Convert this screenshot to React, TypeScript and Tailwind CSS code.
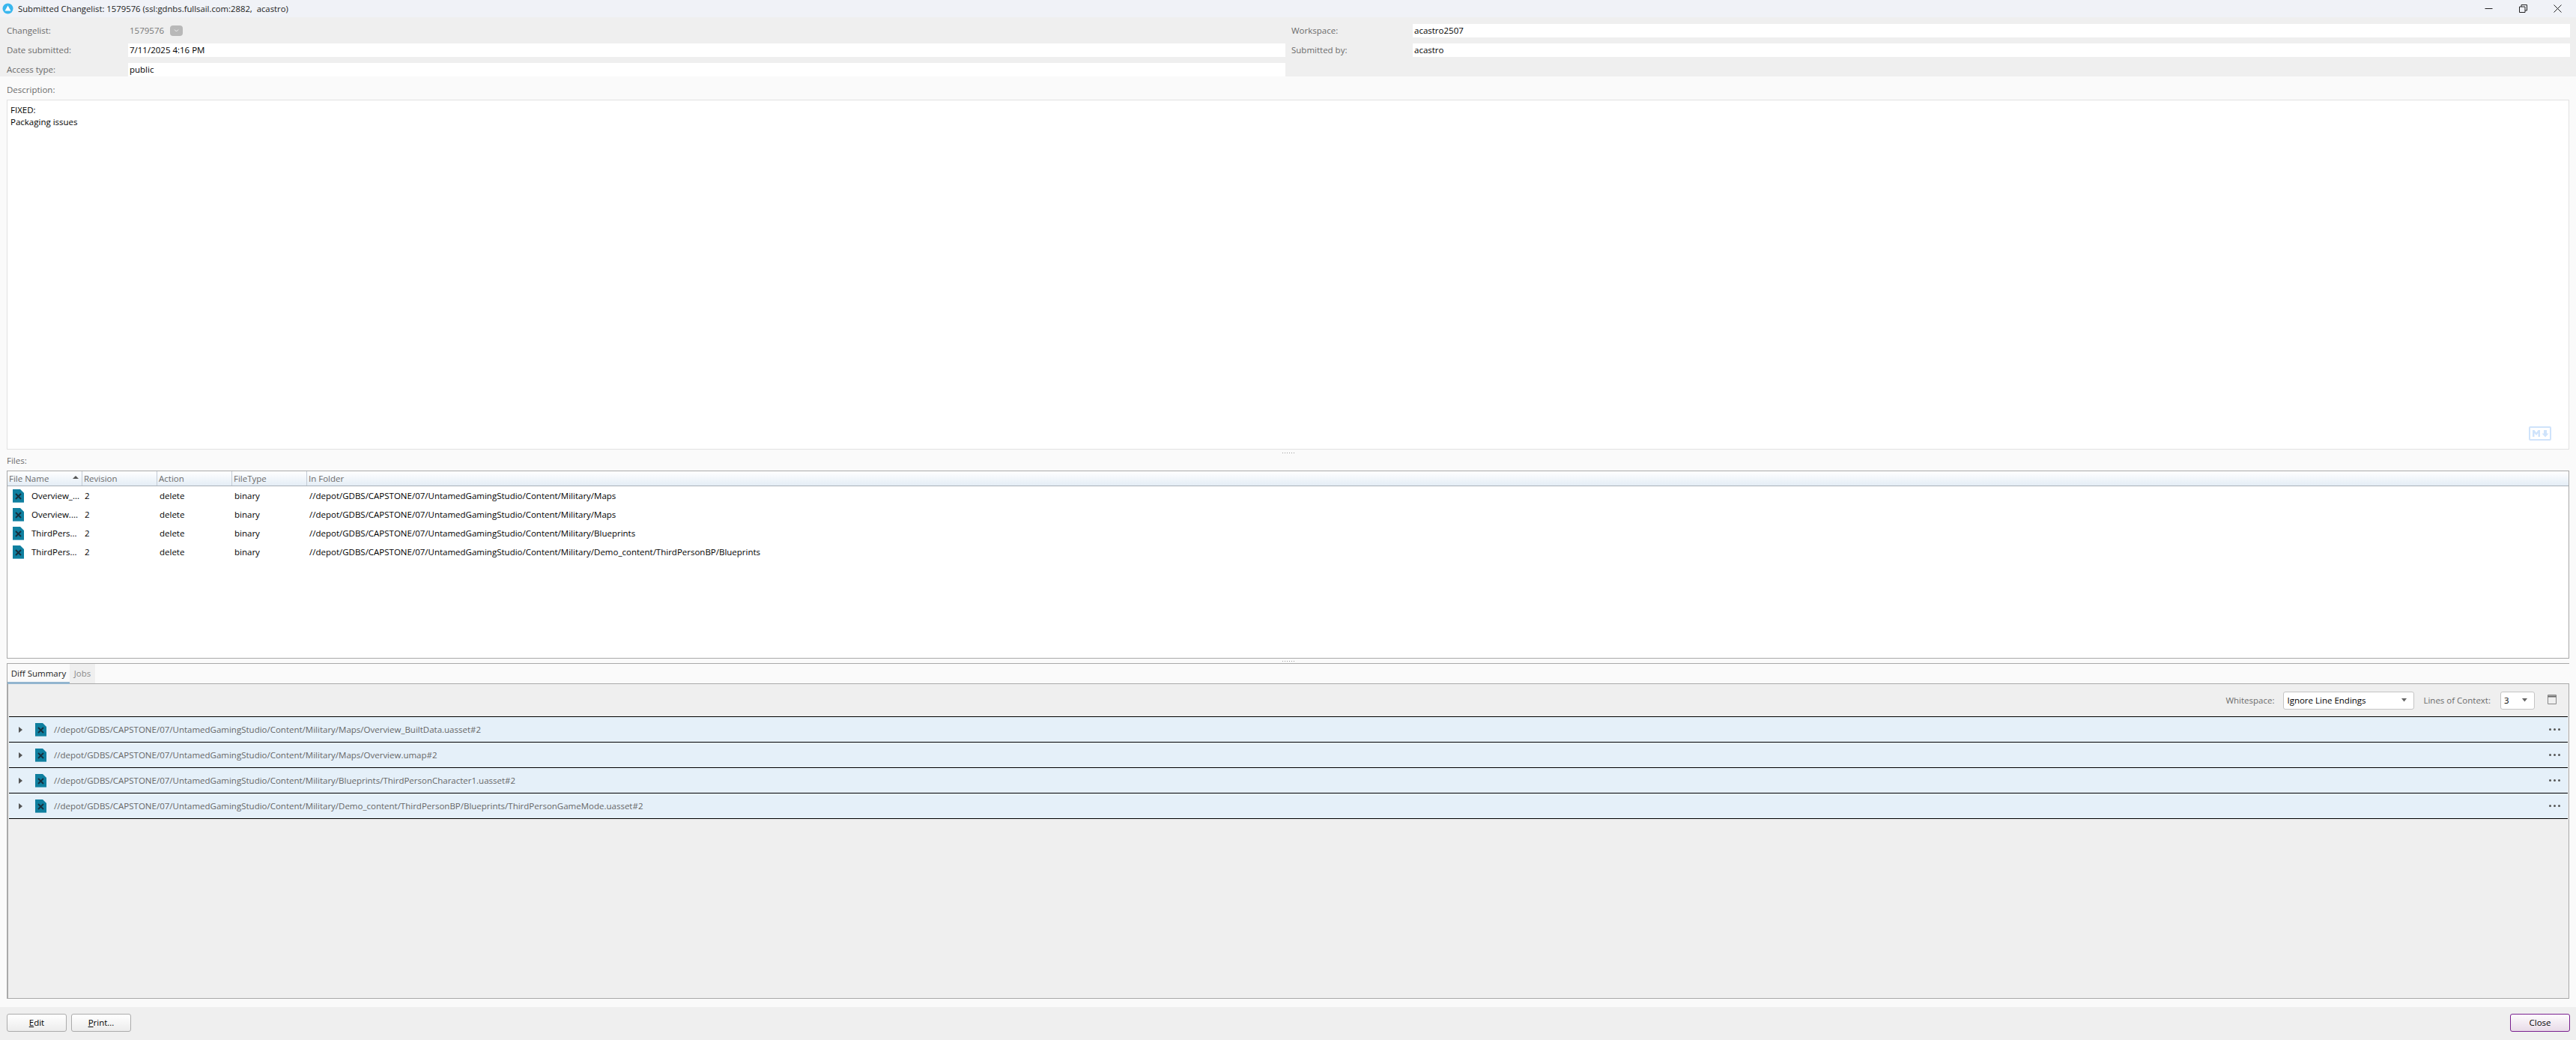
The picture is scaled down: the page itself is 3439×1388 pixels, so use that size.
import type { ReactNode } from 'react'

const FILES = [
  {
    name: 'Overview_...',
    folder: '//depot/GDBS/CAPSTONE/07/UntamedGamingStudio/Content/Military/Maps',
    path: '//depot/GDBS/CAPSTONE/07/UntamedGamingStudio/Content/Military/Maps/Overview_BuiltData.uasset#2',
  },
  {
    name: 'Overview....',
    folder: '//depot/GDBS/CAPSTONE/07/UntamedGamingStudio/Content/Military/Maps',
    path: '//depot/GDBS/CAPSTONE/07/UntamedGamingStudio/Content/Military/Maps/Overview.umap#2',
  },
  {
    name: 'ThirdPers...',
    folder: '//depot/GDBS/CAPSTONE/07/UntamedGamingStudio/Content/Military/Blueprints',
    path: '//depot/GDBS/CAPSTONE/07/UntamedGamingStudio/Content/Military/Blueprints/ThirdPersonCharacter1.uasset#2',
  },
  {
    name: 'ThirdPers...',
    folder: '//depot/GDBS/CAPSTONE/07/UntamedGamingStudio/Content/Military/Demo_content/ThirdPersonBP/Blueprints',
    path: '//depot/GDBS/CAPSTONE/07/UntamedGamingStudio/Content/Military/Demo_content/ThirdPersonBP/Blueprints/ThirdPersonGameMode.uasset#2',
  },
]

function FileIcon() {
  return (
    <svg width="15" height="18" viewBox="0 0 15 18" className="shrink-0">
      <path d="M0 0H10L15 5V18H0Z" fill="#0f7f9f" />
      <path d="M0 17H15V18H0Z" fill="#5fa9c0" />
      <path d="M4 6L11 13M11 6L4 13" stroke="#16303f" strokeWidth="2" fill="none" />
    </svg>
  )
}

function Caret() {
  return (
    <svg width="10" height="5" viewBox="0 0 10 5" className="shrink-0">
      <path d="M1 0H8L4.500 4.500Z" fill="#666" />
    </svg>
  )
}

function Field({ label, value, dim }: { label: string; value: ReactNode; dim?: boolean }) {
  return (
    <div className="flex h-[18px] items-center">
      <div className="w-[162px] shrink-0 text-[#6b6b6b]">{label}</div>
      <div className={`flex h-full flex-1 items-center pl-[2px] ${dim ? '' : 'bg-white'}`}>{value}</div>
    </div>
  )
}

function Header({ label, sorted }: { label: string; sorted?: boolean }) {
  return (
    <div className="flex h-full w-[100px] shrink-0 items-center justify-between border-r border-[#c4ccd6] pl-[2px] pr-[4px] text-[#6b6b6b]">
      <span>{label}</span>
      {sorted && (
        <svg width="8" height="4" viewBox="0 0 8 4" className="mb-[3px]">
          <path d="M0 4L4 0L8 4Z" fill="#555" />
        </svg>
      )}
    </div>
  )
}

function Splitter() {
  return (
    <div className="flex h-[3px] items-center justify-center gap-[2px]">
      {[0, 1, 2, 3, 4, 5].map((i) => (
        <span key={i} className="size-[1px] bg-[#9a9a9a]" />
      ))}
    </div>
  )
}

function DialogButton({ children, accent }: { children: ReactNode; accent?: boolean }) {
  return (
    <button
      type="button"
      className={`h-[24px] w-[80px] rounded-[3px] border text-black ${
        accent
          ? 'border-[#7a1f8f] bg-gradient-to-b from-[#fdfbfd] to-[#e8dbe8]'
          : 'border-[#ababab] bg-gradient-to-b from-white to-[#ececec]'
      }`}
    >
      {children}
    </button>
  )
}

export default function App() {
  return (
    <div className="flex h-[1388px] w-[3439px] flex-col overflow-hidden bg-[#fafafa] font-['Open_Sans',sans-serif] text-[11.5px] leading-none text-black">
      {/* title bar */}
      <div className="flex h-[23px] items-center bg-[#f0f2f7] pl-[3px]">
        <svg width="15" height="15" viewBox="0 0 15 15" className="shrink-0">
          <circle cx="7.500" cy="7.500" r="7" fill="#3ab7ee" />
          <path d="M7.500 3.500L11.500 10.500H3.500Z" fill="#fff" />
        </svg>
        <span className="ml-[6px] whitespace-pre text-[11.3px] text-[#222]">Submitted Changelist: 1579576 (ssl:gdnbs.fullsail.com:2882,  acastro)</span>
        <div className="ml-auto flex items-center">
          <svg width="11" height="11" viewBox="0 0 11 11" className="mr-[35px]">
            <path d="M0.500 5.500H10.500" stroke="#222" />
          </svg>
          <svg width="11" height="11" viewBox="0 0 11 11" className="mr-[35px]">
            <path d="M0.500 3H8V10.500H0.500Z M3 3V0.500H10.500V8H8" stroke="#222" fill="none" />
          </svg>
          <svg width="11" height="11" viewBox="0 0 11 11" className="mr-[19px]">
            <path d="M0.500 0.500L10.500 10.500M10.500 0.500L0.500 10.500" stroke="#222" />
          </svg>
        </div>
      </div>

      {/* changelist fields */}
      <div className="flex h-[79px] bg-[#efefef] pl-[9px] pr-[8px] pt-[9px]">
        <div className="flex w-[1707px] flex-col gap-[8px]">
          <Field
            label="Changelist:"
            dim
            value={
              <div className="flex items-center gap-[8px] text-[#777]">
                1579576
                <span className="flex h-[14px] w-[17px] items-center justify-center rounded-[4px] bg-[#b8b8b8]">
                  <svg width="7" height="4" viewBox="0 0 7 4">
                    <path d="M1 0.500L3.500 3L6 0.500" stroke="#eee" fill="none" />
                  </svg>
                </span>
              </div>
            }
          />
          <Field label="Date submitted:" value="7/11/2025 4:16 PM" />
          <Field label="Access type:" value="public" />
        </div>
        <div className="ml-[8px] flex flex-1 flex-col gap-[8px]">
          <Field label="Workspace:" value="acastro2507" />
          <Field label="Submitted by:" value="acastro" />
        </div>
      </div>

      {/* description */}
      <div className="flex h-[31px] items-center pl-[9px] pt-[5px] text-[#6b6b6b]">Description:</div>
      <div className="relative mx-[9px] h-[467px] border border-[#e2e2e2] bg-white px-[4px] pt-[5px] leading-[16px]">
        <div>FIXED:</div>
        <div>Packaging issues</div>
        <svg width="30" height="19" viewBox="0 0 30 19" className="absolute bottom-[11px] right-[23px]">
          <rect x="1" y="1" width="28" height="17" rx="1" fill="none" stroke="#cfe3fb" strokeWidth="2" />
          <path d="M5 14V5H7.500L10 8.500L12.500 5H15V14H12.500V9L10 12L7.500 9V14Z" fill="#cfe3fb" />
          <path d="M20 5H24V9.500H26.500L22 14.500L17.500 9.500H20Z" fill="#cfe3fb" />
        </svg>
      </div>
      <div className="pt-[3px]">
        <Splitter />
      </div>

      {/* files */}
      <div className="flex h-[22px] items-center pb-[4px] pl-[9px] text-[#6b6b6b]">Files:</div>
      <div className="mx-[9px] flex h-[251px] flex-col border border-[#a9a9a9] bg-white">
        <div className="flex h-[20px] shrink-0 items-center border-b border-[#a9b0b8] bg-gradient-to-b from-white to-[#e4edf6]">
          <Header label="File Name" sorted />
          <Header label="Revision" />
          <Header label="Action" />
          <Header label="FileType" />
          <div className="pl-[2px] text-[#6b6b6b]">In Folder</div>
        </div>
        <div className="flex flex-col">
          {FILES.map((f) => (
            <div key={f.path} className="flex h-[25px] items-center">
              <div className="flex w-[100px] shrink-0 items-center pl-[7px]">
                <FileIcon />
                <span className="ml-[10px]">{f.name}</span>
              </div>
              <div className="w-[100px] shrink-0 pl-[3px]">2</div>
              <div className="w-[100px] shrink-0 pl-[3px]">delete</div>
              <div className="w-[100px] shrink-0 pl-[3px]">binary</div>
              <div className="pl-[3px]">{f.folder}</div>
            </div>
          ))}
        </div>
      </div>
      <div className="pt-[2px]">
        <Splitter />
      </div>

      {/* tabs */}
      <div className="mx-[9px] mt-[1px] flex h-[28px] shrink-0 items-stretch border-l border-t border-[#a9a9a9]">
        <div className="flex w-[83px] items-center justify-center border-b-[3px] border-[#93b5cf] pt-[2px] text-[#222]">Diff Summary</div>
        <div className="flex w-[34px] items-center justify-center border-b border-[#a9a9a9] bg-[#efefef] text-[#8a8a8a]">Jobs</div>
        <div className="flex-1 border-b border-[#a9a9a9]" />
      </div>

      {/* diff summary */}
      <div className="mx-[9px] flex h-[420px] flex-col border-b border-l-[2px] border-r border-[#a9a9a9] bg-[#efefef]">
        <div className="flex h-[43px] items-center justify-end pr-[16px]">
          <span className="text-[#6b6b6b]">Whitespace:</span>
          <div className="ml-[12px] flex h-[24px] w-[175px] items-center justify-between rounded-[3px] border border-[#c4c4c4] bg-white pl-[4px] pr-[7px]">
            Ignore Line Endings
            <Caret />
          </div>
          <span className="ml-[12px] text-[#6b6b6b]">Lines of Context:</span>
          <div className="ml-[13px] flex h-[24px] w-[46px] items-center justify-between rounded-[3px] border border-[#c4c4c4] bg-white pl-[4px] pr-[7px]">
            3
            <Caret />
          </div>
          <svg width="12" height="13" viewBox="0 0 12 13" className="mb-[3px] ml-[17px]">
            <path d="M0.500 0.500H11.500V12.500H0.500Z" fill="none" stroke="#888" />
            <path d="M0.500 2.500H11.500" stroke="#666" strokeWidth="2" />
          </svg>
        </div>
        <div className="ml-[1px] mr-[1px] flex flex-col border-t border-black">
          {FILES.map((f) => (
            <div key={f.path} className="flex h-[34px] items-center border-b border-black bg-[#e5f0f9] pr-[10px]">
              <svg width="5" height="8" viewBox="0 0 5 8" className="ml-[13px] shrink-0">
                <path d="M0 0L5 4L0 8Z" fill="#555" />
              </svg>
              <div className="ml-[17px] flex">
                <FileIcon />
              </div>
              <span className="ml-[10px] text-[#666]">{f.path}</span>
              <div className="ml-auto flex gap-[3px]">
                <span className="size-[3px] rounded-full bg-[#555]" />
                <span className="size-[3px] rounded-full bg-[#555]" />
                <span className="size-[3px] rounded-full bg-[#555]" />
              </div>
            </div>
          ))}
        </div>
      </div>

      {/* footer */}
      <div className="mt-[11px] flex flex-1 items-start gap-[6px] bg-[#efefef] pl-[9px] pr-[8px] pt-[9px]">
        <DialogButton>
          <span className="underline">E</span>dit
        </DialogButton>
        <DialogButton>
          <span className="underline">P</span>rint...
        </DialogButton>
        <div className="ml-auto">
          <DialogButton accent>Close</DialogButton>
        </div>
      </div>
    </div>
  )
}
